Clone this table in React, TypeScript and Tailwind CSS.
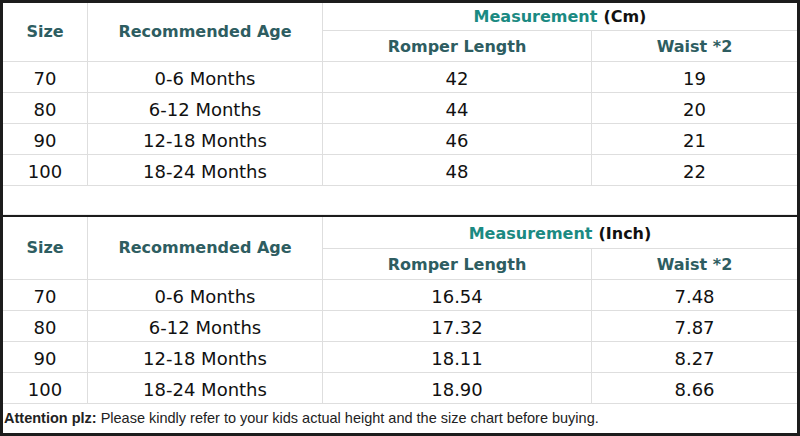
const rowsCm = [
  ['70', '0-6 Months', '42', '19'],
  ['80', '6-12 Months', '44', '20'],
  ['90', '12-18 Months', '46', '21'],
  ['100', '18-24 Months', '48', '22'],
];

const rowsInch = [
  ['70', '0-6 Months', '16.54', '7.48'],
  ['80', '6-12 Months', '17.32', '7.87'],
  ['90', '12-18 Months', '18.11', '8.27'],
  ['100', '18-24 Months', '18.90', '8.66'],
];

const head = 'text-[#2e5d61] text-[16px] font-bold';
const cell = 'flex items-center justify-center border-[#dedede]';

const SizeTable = ({ unit, rows, topRow }: { unit: string; rows: string[][]; topRow: string }) => (
  <div className="grid grid-cols-[85px_235px_269px_1fr]">
    <div className={`${cell} row-span-2 border-r border-b ${head}`}>Size</div>
    <div className={`${cell} row-span-2 border-r border-b ${head}`}>Recommended Age</div>
    <div className={`${cell} col-span-2 border-b ${topRow} text-[16px] font-bold`}>
      <span className="text-[#1b8a82]">Measurement</span>
      <span className="text-[#111] ml-[6px]">({unit})</span>
    </div>
    <div className={`${cell} h-[31px] pt-[1px] border-r border-b ${head}`}>Romper Length</div>
    <div className={`${cell} h-[31px] pt-[1px] border-b ${head}`}>Waist *2</div>
    {rows.map(r => (
      <div key={r[0]} className="contents text-[#111] text-[18px]">
        <div className={`${cell} h-[31px] pt-[2px] border-r border-b`}>{r[0]}</div>
        <div className={`${cell} h-[31px] pt-[2px] border-r border-b`}>{r[1]}</div>
        <div className={`${cell} h-[31px] pt-[2px] border-r border-b`}>{r[2]}</div>
        <div className={`${cell} h-[31px] pt-[2px] border-b`}>{r[3]}</div>
      </div>
    ))}
  </div>
);

export default function App() {
  return (
    <div className="w-[800px] h-[436px] bg-white border-[3px] border-[#1c1c1c] flex flex-col font-['DejaVu_Sans',sans-serif]">
      <SizeTable unit="Cm" rows={rowsCm} topRow="h-[28px] pt-[1px]" />
      <div className="h-[29px] border-b border-[#ececec]" />
      <div className="h-[2px] bg-[#1c1c1c]" />
      <SizeTable unit="Inch" rows={rowsInch} topRow="h-[32px] pt-[3px]" />
      <div className="flex-1 flex items-center pl-[1px] pt-[1px] text-[14.5px] text-[#222] font-['Liberation_Sans',Arial,sans-serif]">
        <span className="font-bold mr-[4px]">Attention plz:</span>
        <span>Please kindly refer to your kids actual height and the size chart before buying.</span>
      </div>
    </div>
  );
}
